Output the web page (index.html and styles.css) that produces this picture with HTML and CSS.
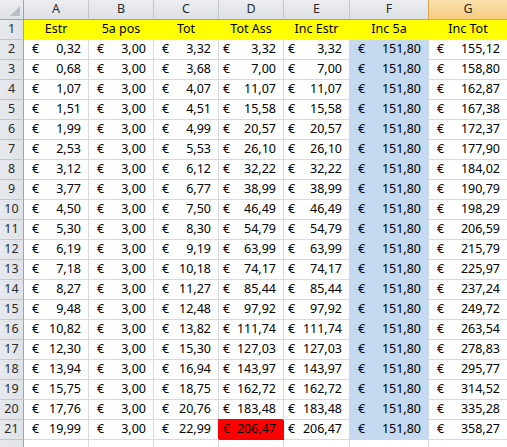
FILE: index.html
```html
<!DOCTYPE html>
<html lang="it">
<head>
<meta charset="utf-8">
<title>Foglio</title>
<link rel="stylesheet" href="styles.css">
</head>
<body>
<div class="sheet">
  <div class="corner"><svg width="24" height="20" viewBox="0 0 24 20"><polygon points="20,6 20,16 10,16" fill="#b9bec6"/></svg></div>
  <div class="h">A</div><div class="h">B</div><div class="h">C</div><div class="h">D</div><div class="h">E</div><div class="h">F</div><div class="h sel">G</div>

  <div class="rh">1</div>
  <div class="y">Estr</div><div class="y">5a pos</div><div class="y">Tot</div><div class="y">Tot Ass</div><div class="y">Inc Estr</div><div class="y">Inc 5a</div><div class="y">Inc Tot</div>

  <div class="rh">2</div>
  <div class="c"><span>€</span><span>0,32</span></div><div class="c"><span>€</span><span>3,00</span></div><div class="c"><span>€</span><span>3,32</span></div><div class="c d"><span>€</span><span>3,32</span></div><div class="c d"><span>€</span><span>3,32</span></div><div class="c f"><span>€</span><span>151,80</span></div><div class="c"><span>€</span><span>155,12</span></div>

  <div class="rh">3</div>
  <div class="c"><span>€</span><span>0,68</span></div><div class="c"><span>€</span><span>3,00</span></div><div class="c"><span>€</span><span>3,68</span></div><div class="c d"><span>€</span><span>7,00</span></div><div class="c d"><span>€</span><span>7,00</span></div><div class="c f"><span>€</span><span>151,80</span></div><div class="c"><span>€</span><span>158,80</span></div>

  <div class="rh">4</div>
  <div class="c"><span>€</span><span>1,07</span></div><div class="c"><span>€</span><span>3,00</span></div><div class="c"><span>€</span><span>4,07</span></div><div class="c d"><span>€</span><span>11,07</span></div><div class="c d"><span>€</span><span>11,07</span></div><div class="c f"><span>€</span><span>151,80</span></div><div class="c"><span>€</span><span>162,87</span></div>

  <div class="rh">5</div>
  <div class="c"><span>€</span><span>1,51</span></div><div class="c"><span>€</span><span>3,00</span></div><div class="c"><span>€</span><span>4,51</span></div><div class="c d"><span>€</span><span>15,58</span></div><div class="c d"><span>€</span><span>15,58</span></div><div class="c f"><span>€</span><span>151,80</span></div><div class="c"><span>€</span><span>167,38</span></div>

  <div class="rh">6</div>
  <div class="c"><span>€</span><span>1,99</span></div><div class="c"><span>€</span><span>3,00</span></div><div class="c"><span>€</span><span>4,99</span></div><div class="c d"><span>€</span><span>20,57</span></div><div class="c d"><span>€</span><span>20,57</span></div><div class="c f"><span>€</span><span>151,80</span></div><div class="c"><span>€</span><span>172,37</span></div>

  <div class="rh">7</div>
  <div class="c"><span>€</span><span>2,53</span></div><div class="c"><span>€</span><span>3,00</span></div><div class="c"><span>€</span><span>5,53</span></div><div class="c d"><span>€</span><span>26,10</span></div><div class="c d"><span>€</span><span>26,10</span></div><div class="c f"><span>€</span><span>151,80</span></div><div class="c"><span>€</span><span>177,90</span></div>

  <div class="rh">8</div>
  <div class="c"><span>€</span><span>3,12</span></div><div class="c"><span>€</span><span>3,00</span></div><div class="c"><span>€</span><span>6,12</span></div><div class="c d"><span>€</span><span>32,22</span></div><div class="c d"><span>€</span><span>32,22</span></div><div class="c f"><span>€</span><span>151,80</span></div><div class="c"><span>€</span><span>184,02</span></div>

  <div class="rh">9</div>
  <div class="c"><span>€</span><span>3,77</span></div><div class="c"><span>€</span><span>3,00</span></div><div class="c"><span>€</span><span>6,77</span></div><div class="c d"><span>€</span><span>38,99</span></div><div class="c d"><span>€</span><span>38,99</span></div><div class="c f"><span>€</span><span>151,80</span></div><div class="c"><span>€</span><span>190,79</span></div>

  <div class="rh">10</div>
  <div class="c"><span>€</span><span>4,50</span></div><div class="c"><span>€</span><span>3,00</span></div><div class="c"><span>€</span><span>7,50</span></div><div class="c d"><span>€</span><span>46,49</span></div><div class="c d"><span>€</span><span>46,49</span></div><div class="c f"><span>€</span><span>151,80</span></div><div class="c"><span>€</span><span>198,29</span></div>

  <div class="rh">11</div>
  <div class="c"><span>€</span><span>5,30</span></div><div class="c"><span>€</span><span>3,00</span></div><div class="c"><span>€</span><span>8,30</span></div><div class="c d"><span>€</span><span>54,79</span></div><div class="c d"><span>€</span><span>54,79</span></div><div class="c f"><span>€</span><span>151,80</span></div><div class="c"><span>€</span><span>206,59</span></div>

  <div class="rh">12</div>
  <div class="c"><span>€</span><span>6,19</span></div><div class="c"><span>€</span><span>3,00</span></div><div class="c"><span>€</span><span>9,19</span></div><div class="c d"><span>€</span><span>63,99</span></div><div class="c d"><span>€</span><span>63,99</span></div><div class="c f"><span>€</span><span>151,80</span></div><div class="c"><span>€</span><span>215,79</span></div>

  <div class="rh">13</div>
  <div class="c"><span>€</span><span>7,18</span></div><div class="c"><span>€</span><span>3,00</span></div><div class="c"><span>€</span><span>10,18</span></div><div class="c d"><span>€</span><span>74,17</span></div><div class="c d"><span>€</span><span>74,17</span></div><div class="c f"><span>€</span><span>151,80</span></div><div class="c"><span>€</span><span>225,97</span></div>

  <div class="rh">14</div>
  <div class="c"><span>€</span><span>8,27</span></div><div class="c"><span>€</span><span>3,00</span></div><div class="c"><span>€</span><span>11,27</span></div><div class="c d"><span>€</span><span>85,44</span></div><div class="c d"><span>€</span><span>85,44</span></div><div class="c f"><span>€</span><span>151,80</span></div><div class="c"><span>€</span><span>237,24</span></div>

  <div class="rh">15</div>
  <div class="c"><span>€</span><span>9,48</span></div><div class="c"><span>€</span><span>3,00</span></div><div class="c"><span>€</span><span>12,48</span></div><div class="c d"><span>€</span><span>97,92</span></div><div class="c d"><span>€</span><span>97,92</span></div><div class="c f"><span>€</span><span>151,80</span></div><div class="c"><span>€</span><span>249,72</span></div>

  <div class="rh">16</div>
  <div class="c"><span>€</span><span>10,82</span></div><div class="c"><span>€</span><span>3,00</span></div><div class="c"><span>€</span><span>13,82</span></div><div class="c d"><span>€</span><span>111,74</span></div><div class="c d"><span>€</span><span>111,74</span></div><div class="c f"><span>€</span><span>151,80</span></div><div class="c"><span>€</span><span>263,54</span></div>

  <div class="rh">17</div>
  <div class="c"><span>€</span><span>12,30</span></div><div class="c"><span>€</span><span>3,00</span></div><div class="c"><span>€</span><span>15,30</span></div><div class="c d"><span>€</span><span>127,03</span></div><div class="c d"><span>€</span><span>127,03</span></div><div class="c f"><span>€</span><span>151,80</span></div><div class="c"><span>€</span><span>278,83</span></div>

  <div class="rh">18</div>
  <div class="c"><span>€</span><span>13,94</span></div><div class="c"><span>€</span><span>3,00</span></div><div class="c"><span>€</span><span>16,94</span></div><div class="c d"><span>€</span><span>143,97</span></div><div class="c d"><span>€</span><span>143,97</span></div><div class="c f"><span>€</span><span>151,80</span></div><div class="c"><span>€</span><span>295,77</span></div>

  <div class="rh">19</div>
  <div class="c"><span>€</span><span>15,75</span></div><div class="c"><span>€</span><span>3,00</span></div><div class="c"><span>€</span><span>18,75</span></div><div class="c d"><span>€</span><span>162,72</span></div><div class="c d"><span>€</span><span>162,72</span></div><div class="c f"><span>€</span><span>151,80</span></div><div class="c"><span>€</span><span>314,52</span></div>

  <div class="rh">20</div>
  <div class="c"><span>€</span><span>17,76</span></div><div class="c"><span>€</span><span>3,00</span></div><div class="c"><span>€</span><span>20,76</span></div><div class="c d"><span>€</span><span>183,48</span></div><div class="c d"><span>€</span><span>183,48</span></div><div class="c f"><span>€</span><span>151,80</span></div><div class="c"><span>€</span><span>335,28</span></div>

  <div class="rh">21</div>
  <div class="c"><span>€</span><span>19,99</span></div><div class="c"><span>€</span><span>3,00</span></div><div class="c"><span>€</span><span>22,99</span></div><div class="c d red"><span>€</span><span>206,47</span></div><div class="c d"><span>€</span><span>206,47</span></div><div class="c f"><span>€</span><span>151,80</span></div><div class="c"><span>€</span><span>358,27</span></div>

  <div class="rh"></div>
  <div class="c"></div><div class="c"></div><div class="c"></div><div class="c"></div><div class="c"></div><div class="c"></div><div class="c"></div>
</div>
</body>
</html>
```

FILE: styles.css
```css
html, body {
  margin: 0;
  padding: 0;
  background: #ffffff;
  overflow: hidden;
}

.sheet {
  display: grid;
  grid-template-columns: 24px 65px 65px 65px 65px 66px 79px 79px;
  grid-auto-rows: 20px;
  font-family: "Noto Sans", "Liberation Sans", sans-serif;
  font-size: 12.5px;
  line-height: 1;
  color: #000;
}

.sheet > div {
  box-sizing: border-box;
  border-right: 1px solid #d9dadb;
  border-bottom: 1px solid #d9dadb;
  white-space: nowrap;
}

.corner {
  background: linear-gradient(#eceef1, #dfe2e6);
  border-right-color: #9ea4ac !important;
  border-bottom-color: #9ea4ac !important;
}
.corner svg {
  display: block;
}

.h {
  background: linear-gradient(#eceef1, #dde0e5);
  border-right-color: #c3c7cd !important;
  border-bottom-color: #9ea4ac !important;
  color: #2b2b2b;
  display: flex;
  align-items: center;
  justify-content: center;
}

.h.sel {
  background: linear-gradient(#fbe2ad, #f6cc80);
  border-right-color: #e2a24c !important;
  border-bottom-color: #e2a24c !important;
  box-shadow: -1px 0 0 #e2a24c;
}

.rh {
  background: linear-gradient(90deg, #e6e9ed, #dfe2e7);
  border-right-color: #9ea4ac !important;
  border-bottom-color: #c3c7cd !important;
  color: #2b2b2b;
  display: flex;
  align-items: center;
  justify-content: center;
}

.y {
  background: #ffff00;
  border-right-color: #ffff00 !important;
  border-bottom-color: #ffff00 !important;
  display: flex;
  align-items: center;
  justify-content: center;
}

.c {
  display: flex;
  align-items: center;
  justify-content: space-between;
  padding: 0 7px 0 8px;
}

.c.d {
  padding-left: 4px;
}

.c.f {
  background: #c5d9f1;
  border-right-color: #c5d9f1 !important;
  border-bottom-color: #c5d9f1 !important;
  box-shadow: -1px 0 0 #c5d9f1;
}

.c.red {
  background: #ff0000;
  border-right-color: #ff0000 !important;
  border-bottom-color: #ff0000 !important;
  box-shadow: -1px -1px 0 #ff0000;
  color: #000;
}
```
